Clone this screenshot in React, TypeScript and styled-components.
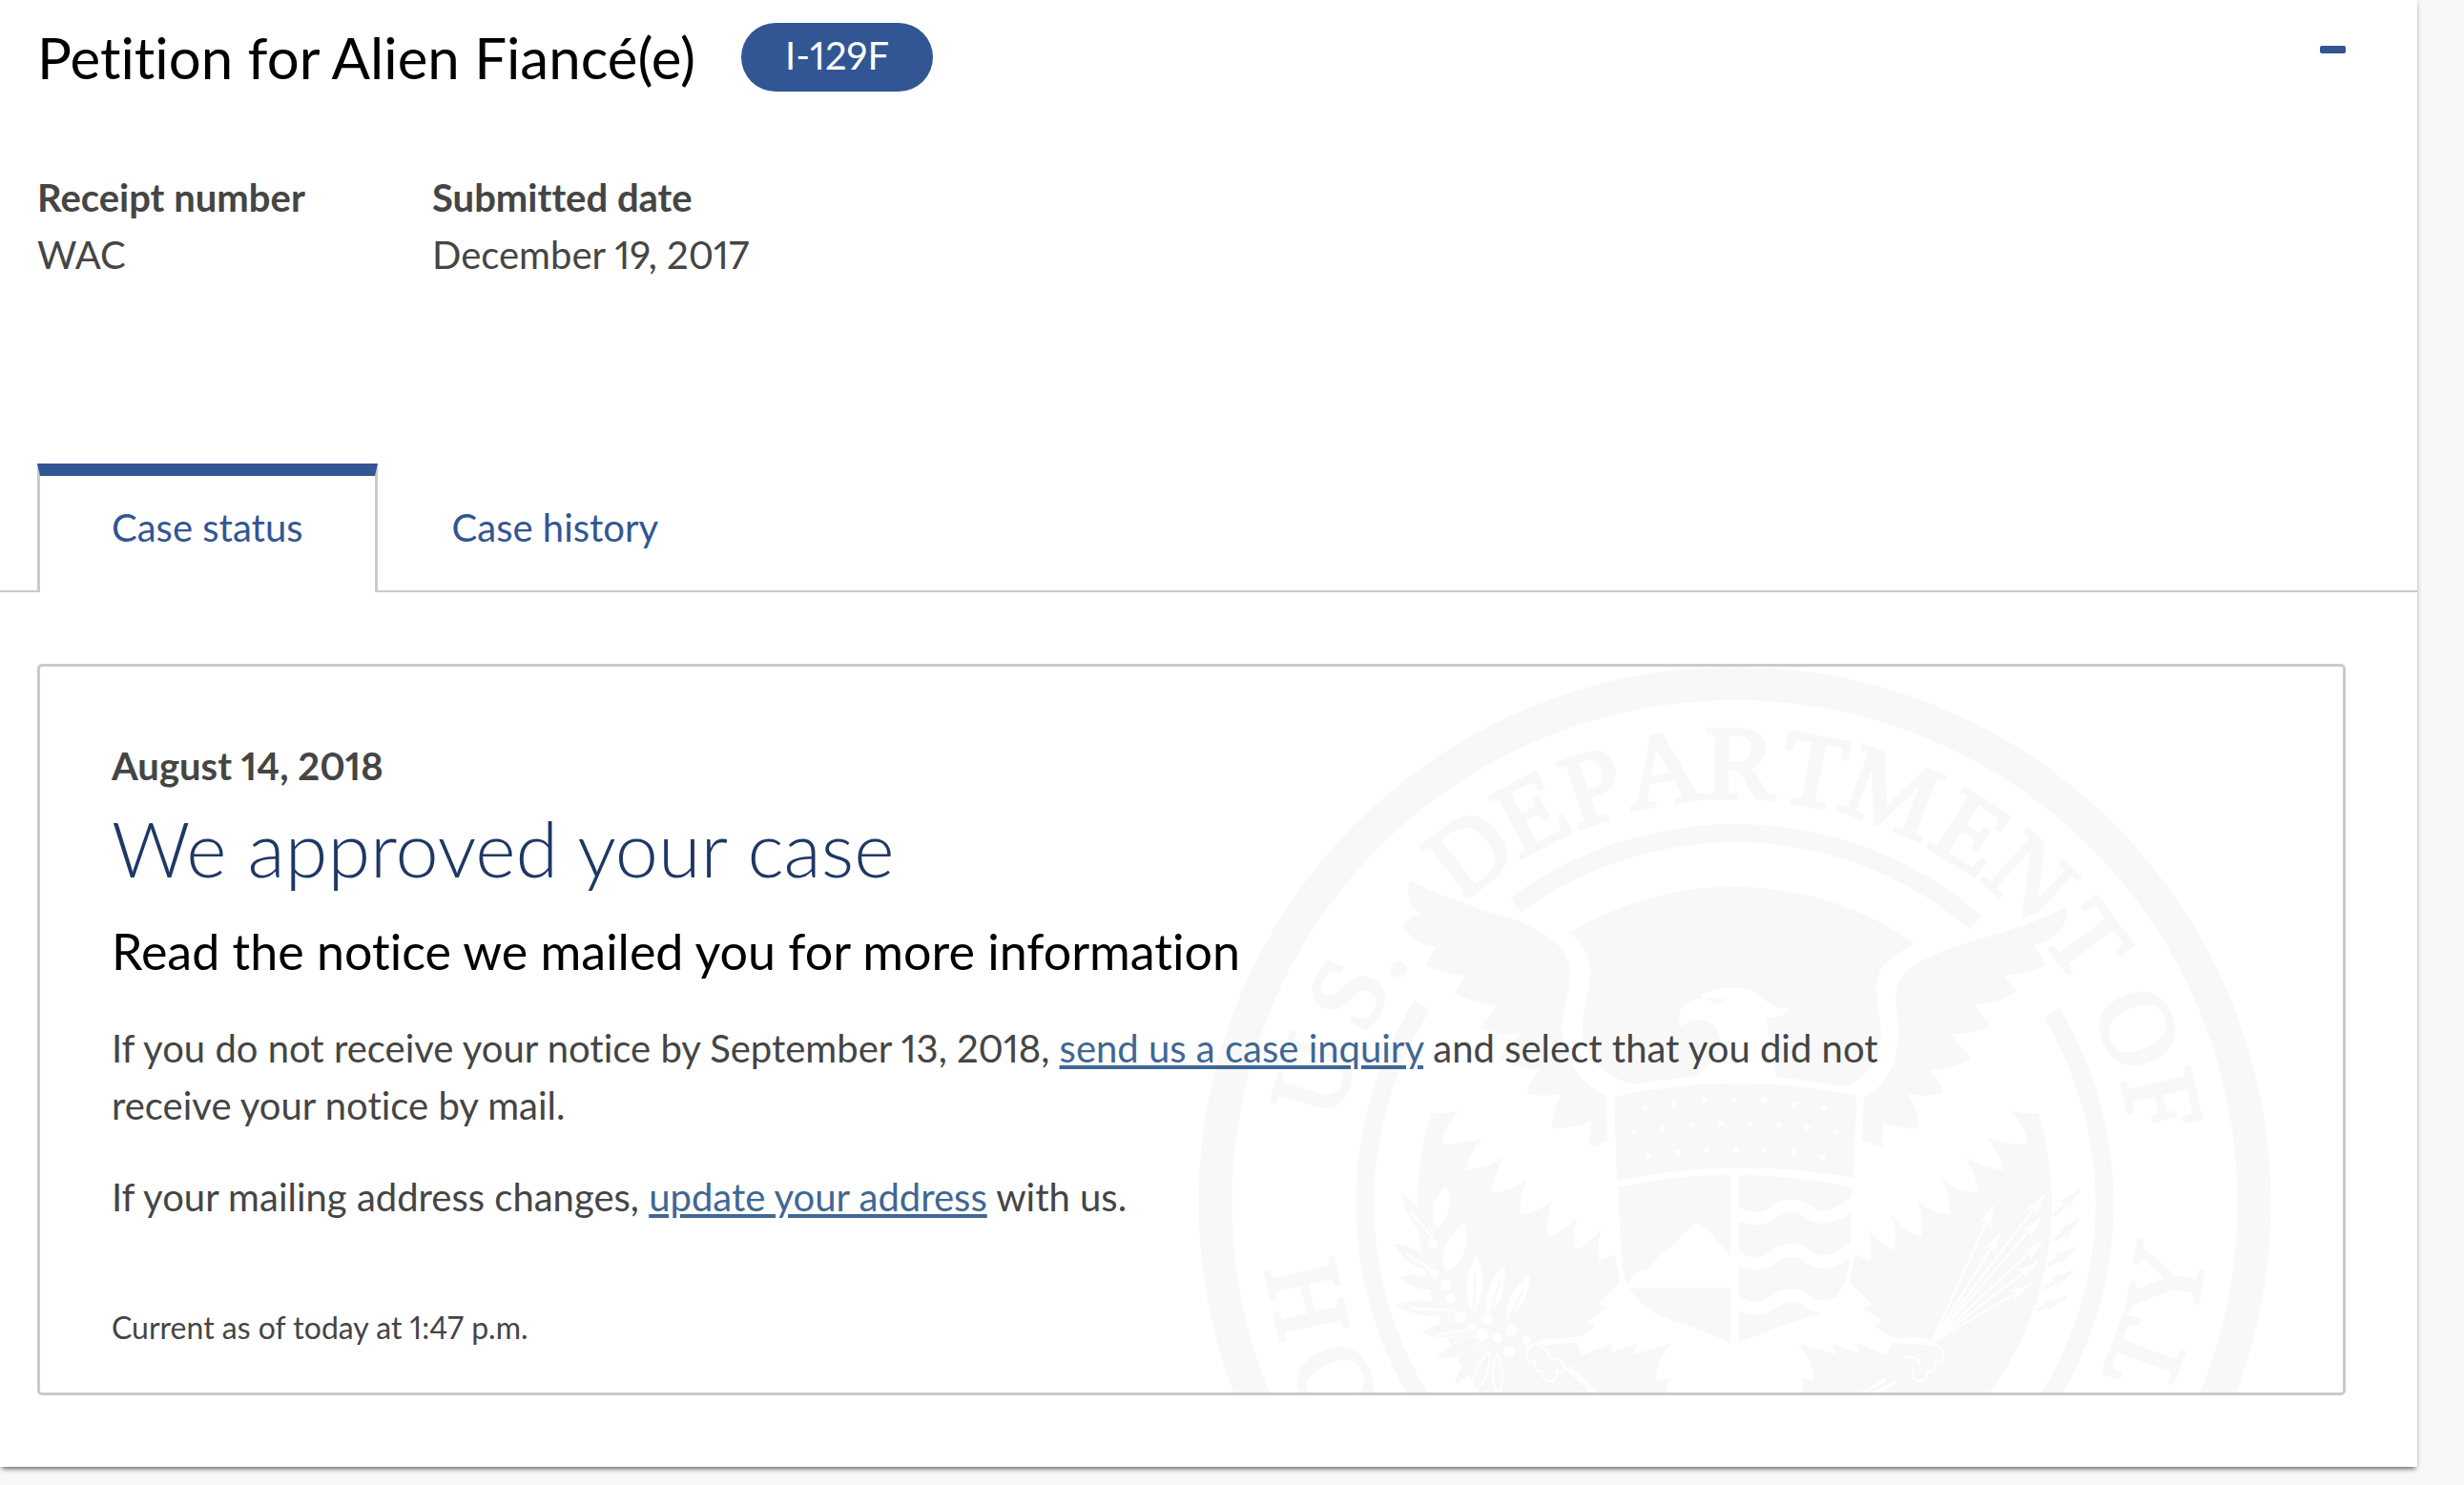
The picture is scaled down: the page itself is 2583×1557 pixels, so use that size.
import React, { useState } from "react";
import styled, { createGlobalStyle } from "styled-components";

const color = {
  blue: "#325694",
  navy: "#1f3865",
  link: "#3f6794",
  text: "#454545",
  line: "#cacaca",
  page: "#f8f8f8",
  seal: "#f8f8f8",
};

const GlobalStyle = createGlobalStyle`
  * { box-sizing: border-box; }
  body {
    margin: 0;
    background: ${color.page};
    color: ${color.text};
    font-family: Lato, "Open Sans", sans-serif;
    font-size: 40px;
    line-height: 60px;
    font-variant-ligatures: none;
    font-variant-numeric: proportional-nums;
  }
`;

const Panel = styled.main`
  margin-right: 49px;
  margin-bottom: 19px;
  padding: 24px 0 75px;
  background: #fff;
  box-shadow: 0 4px 5px -2px rgba(0, 0, 0, 0.55), 0 0 5px rgba(0, 0, 0, 0.14);
`;

const Header = styled.header`
  display: flex;
  align-items: center;
  gap: 48px;
  padding: 0 75px 0 39px;
`;

const Title = styled.h1`
  margin: 0;
  color: #000;
  font-size: 60px;
  font-weight: 400;
  line-height: 72px;
`;

const FormBadge = styled.span`
  padding: 4px 46px 8px;
  border-radius: 36px;
  background: ${color.blue};
  color: #fff;
  line-height: 60px;
`;

const CollapseButton = styled.button`
  align-self: flex-start;
  display: flex;
  margin-left: auto;
  padding: 24px 0;
  border: 0;
  background: none;
  cursor: pointer;
`;

const Minus = styled.span`
  width: 27px;
  height: 8px;
  border-radius: 2px;
  background: ${color.blue};
`;

const Facts = styled.dl`
  display: flex;
  margin: 81px 0 189px;
  padding: 0 39px;
`;

const Fact = styled.div`
  min-width: 414px;
`;

const FactName = styled.dt`
  font-weight: 700;
`;

const FactValue = styled.dd`
  margin: 0;
`;

const TabList = styled.div`
  display: flex;
  padding-left: 39px;
  border-bottom: 2px solid ${color.line};
`;

const Tab = styled.button<{ $active: boolean }>`
  margin-bottom: -2px;
  padding: 24px 75px 38px;
  border: 3px solid ${(p) => (p.$active ? color.line : "transparent")};
  border-top: 13px solid ${(p) => (p.$active ? color.blue : "transparent")};
  border-bottom: 0;
  background: ${(p) => (p.$active ? "#fff" : "none")};
  color: ${color.blue};
  font: inherit;
  cursor: pointer;
`;

const StatusCard = styled.section`
  position: relative;
  overflow: hidden;
  margin: 75px 75px 0 39px;
  padding: 74px 75px 44px;
  border: 3px solid ${color.line};
  border-radius: 5px;
`;

const StatusText = styled.div`
  position: relative;
  max-width: 1930px;
`;

const StatusDate = styled.p`
  margin: 0;
  font-weight: 700;
`;

const StatusTitle = styled.h2`
  margin: 14px 0 0;
  color: ${color.navy};
  font-size: 81px;
  font-weight: 300;
  line-height: 84px;
`;

const StatusLead = styled.h3`
  margin: 36px 0 42px;
  color: #000;
  font-size: 52px;
  font-weight: 400;
  line-height: 60px;
`;

const Paragraph = styled.p`
  margin: 0 0 36px;
`;

const TextLink = styled.a`
  color: ${color.link};
  text-decoration: underline;
  text-decoration-thickness: 4px;
  text-underline-offset: 3px;
`;

const Timestamp = styled.p`
  margin: 83px 0 0;
  font-size: 32px;
  line-height: 48px;
`;

const SealArt = styled.svg`
  position: absolute;
  top: 0;
  right: 75px;
  width: 1125px;
  height: 1125px;
`;

const CX = 1819.5;
const CY = 1261;

const upperLetters: [string, number][] = [
  ["U", -73.2], ["S", -61.6], [".", -55.2], ["D", -37.2], ["E", -27.6], ["P", -18.8], ["A", -9.4],
  ["R", 0.7], ["T", 10.4], ["M", 21], ["E", 32.6], ["N", 42.4], ["T", 53.4], ["O", 66.6], ["F", 76.6],
];

const lowerLetters: [string, number][] = [
  ["H", -102.7], ["O", -114.4], ["T", 110.4], ["Y", 100.3],
];

const stars: [number, number][] = [
  [1725.7, 1161.3], [1756, 1157.3], [1787.7, 1154], [1819, 1153.3], [1850.7, 1154], [1882.3, 1158], [1913.3, 1161.7],
  [1714, 1187.3], [1744.3, 1183.3], [1775, 1179.3], [1805, 1177.7], [1835.7, 1178.3], [1866, 1180], [1895.7, 1182.7], [1926, 1187.3],
  [1729, 1212.7], [1760, 1208.3], [1790, 1206], [1820.7, 1205.3], [1850.7, 1206], [1881.3, 1208.3], [1911.7, 1213.3],
];

const starPath = (x: number, y: number) =>
  Array.from({ length: 10 }, (_, i) => {
    const r = i % 2 ? 2 : 5;
    const a = (Math.PI * i) / 5 - Math.PI / 2;
    return `${i ? "L" : "M"}${(x + r * Math.cos(a)).toFixed(1)} ${(y + r * Math.sin(a)).toFixed(1)}`;
  }).join("") + "Z";

type Leaf = [number, number, number, number, number];

const leafPath = ([x1, y1, x2, y2, w]: Leaf) => {
  const dx = x2 - x1;
  const dy = y2 - y1;
  const len = Math.hypot(dx, dy);
  const mx = x1 + dx * 0.45;
  const my = y1 + dy * 0.45;
  const nx = (-dy / len) * w;
  const ny = (dx / len) * w;
  return `M${x1} ${y1}Q${mx + nx} ${my + ny} ${x2} ${y2}Q${mx - nx} ${my - ny} ${x1} ${y1}Z`;
};

const darkLeaves: Leaf[] = [
  [1504, 1304, 1469, 1249, 15], [1506, 1332, 1461, 1304, 16], [1516, 1350, 1467, 1339, 15],
  [1528, 1374, 1463, 1369, 17], [1546, 1392, 1491, 1397, 17], [1556, 1402, 1506, 1425, 15],
  [1562, 1408, 1525, 1452, 14],
];

const lightLeaves: Leaf[] = [
  [1507, 1287, 1517, 1243, 17], [1516, 1334, 1537, 1282, 21], [1545, 1378, 1549, 1316, 17],
  [1560, 1380, 1578, 1326, 15], [1580, 1384, 1605, 1336, 14],
];

const berries: [number, number, number][] = [
  [1503, 1305, 5], [1504, 1335, 4], [1517, 1347, 6], [1522, 1362, 5], [1532, 1381, 6], [1544, 1392, 4],
  [1555, 1399, 6], [1560, 1383, 6], [1570, 1403, 5], [1585, 1395, 6], [1583, 1417, 6], [1601, 1405, 5],
];

const arrowHead = (x1: number, y1: number, x2: number, y2: number, len: number) => {
  const d = Math.hypot(x2 - x1, y2 - y1);
  const ux = (x2 - x1) / d;
  const uy = (y2 - y1) / d;
  const bx = x2 - ux * len;
  const by = y2 - uy * len;
  const w = len * 0.26;
  return `M${x2} ${y2}L${bx - uy * w} ${by + ux * w}L${bx + ux * 5} ${by + uy * 5}L${bx + uy * w} ${by - ux * w}Z`;
};

const lightArrows: [number, number][] = [
  [2091, 1264], [2098, 1293], [2144, 1253], [2140, 1277], [2142, 1301], [2137, 1323], [2129, 1347],
];

const darkArrows: [number, number, number, number][] = [
  [2154, 1276, 2181, 1247], [2154, 1301, 2181, 1278], [2148, 1327, 2177, 1308],
  [2144, 1351, 2174, 1333], [2135, 1374, 2167, 1360],
];

const wing =
  "M2167 950C2171 962 2162 985 2133 991L2146 1012Q2128 1021 2102 1023L2115 1039Q2098 1052 2070 1053L2088 1075Q2074 1084 2045 1084L2067 1110Q2050 1120 2024 1122Q2036 1133 2037 1147Q2020 1150 2001 1147Q2012 1162 2012 1183Q1992 1184 1975 1177L1974 1203L1953 1196L1955 1150C1982 1136 1991 1110 1991 1080L1988 1043C1990 1014 2025 1000 2075 985C2110 974 2140 966 2167 950Z";

const leftWing =
  "M1479 922C1474 940 1480 956 1492 958Q1474 962 1472 973Q1486 990 1507 993L1495 1012Q1515 1022 1537 1023L1526 1041Q1547 1053 1570 1054L1553 1077Q1572 1086 1594 1084L1572 1110Q1590 1120 1615 1122Q1603 1133 1602 1147Q1619 1150 1638 1147Q1628 1162 1628 1183Q1648 1184 1669 1176L1667 1199L1672 1203L1686 1196L1685 1149C1657 1136 1638 1108 1638 1075C1640 1055 1648 1035 1647 1017C1642 985 1610 970 1565 957C1530 945 1500 936 1479 922Z";

const lowerWing =
  "M1501 1167Q1518 1168 1532 1164Q1514 1180 1512 1200Q1538 1200 1556 1192Q1541 1208 1538 1227Q1562 1224 1578 1213Q1567 1230 1564 1251Q1588 1248 1603 1236Q1594 1254 1594 1274Q1614 1271 1628 1259Q1621 1276 1624 1297Q1645 1290 1655 1273Q1649 1292 1652 1311Q1670 1304 1680 1287Q1675 1303 1677 1322L1694 1315L1699 1345L1676 1367L1684 1372L1665 1385L1673 1390Q1660 1402 1650 1402L1616 1405L1611 1411L1654 1408L1660 1421L1691 1408L1690 1418L1717 1409L1714 1420L1754 1408Q1738 1426 1736 1447L1750 1445L1746 1466L1557 1466A332 332 0 0 1 1501 1167Z";

const wave = "M1820 1270Q1841 1285 1860 1271T1897 1271T1946 1260";

function Seal() {
  return (
    <SealArt viewBox="1257 699 1125 1125" aria-hidden="true" fill={color.seal}>
      <circle cx={CX} cy={CY} r="544.5" fill="none" stroke={color.seal} strokeWidth="35" />
      <g
        fontFamily='"Liberation Serif", serif'
        fontSize="110"
        textAnchor="middle"
        stroke={color.seal}
        strokeWidth="4"
      >
        {upperLetters.map(([letter, angle]) => (
          <text key={angle} x={CX} y={CY - 424} transform={`rotate(${angle} ${CX} ${CY})`}>
            {letter}
          </text>
        ))}
        {lowerLetters.map(([letter, angle]) => (
          <text key={angle} x={CX} y={CY + 496} transform={`rotate(${angle + 180} ${CX} ${CY})`}>
            {letter}
          </text>
        ))}
      </g>
      <g fill="none" stroke={color.seal} strokeWidth="19">
        <path d="M1590 949A387.500 387.500 0 0 1 2072 967" />
        <path d="M1492 1054A387.500 387.500 0 0 0 1492 1469" />
        <path d="M2152 1062A387.500 387.500 0 0 1 2147 1469" />
      </g>
      <g stroke="#fff" strokeWidth="14" paintOrder="stroke">
        <path d={leftWing} />
        <path d={wing} />
      </g>
      <path d="M1646 978A332 332 0 0 1 2008 989C1975 1008 1968 1015 1968 1040L1973 1083Q1974 1120 1937 1139Q1819 1118 1713 1137C1680 1128 1658 1104 1660 1075C1660 1055 1669 1040 1668 1015C1667 1000 1659 988 1646 978Z" />
      <path
        fill="#fff"
        d="M1774 1131C1790 1118 1808 1108 1805 1092C1802 1074 1790 1068 1780 1069Q1770 1069 1764 1077C1758 1068 1759 1050 1786 1046L1783 1043C1800 1034 1828 1033 1840 1040C1852 1048 1856 1058 1877 1057C1872 1065 1862 1068 1853 1067C1854 1085 1860 1110 1864 1132Z"
      />
      <path d="M1788 1047L1812 1046Q1804 1052 1798 1053Q1796 1049 1788 1047Z" />
      <path d="M1693 1150Q1819 1122 1947 1149L1944 1235Q1820 1212 1696 1238Z" />
      <path fill="#fff" d={stars.map(([x, y]) => starPath(x, y)).join("")} />
      <path d="M1697 1245Q1756 1232 1815 1232V1317L1802 1302L1792 1290L1779 1283L1767 1292L1758 1303L1740 1317L1730 1330L1715 1335L1706 1347Q1700 1330 1698 1260Z" />
      <path d="M1709 1350H1815V1408Q1794 1398 1773 1391C1740 1381 1720 1370 1709 1350Z" />
      <path d="M1824 1232Q1884 1232 1942 1245L1941 1310Q1939 1358 1907 1378Q1850 1396 1824 1408Z" />
      <g fill="none" stroke="#fff" strokeWidth="13">
        <path d={wave} />
        <path d={wave} transform="translate(0 47)" />
        <path d={wave} transform="translate(0 94)" />
      </g>
      <path d={lowerWing} />
      <path d={lowerWing} transform="translate(3639 0) scale(-1 1)" />

      <path d={darkLeaves.map(leafPath).join("")} stroke="#fff" strokeWidth="1" />
      <path d={lightLeaves.map(leafPath).join("")} fill="#fff" />
      <g fill="none" stroke="#fff" strokeWidth="2">
        <path d="M1504 1300L1480 1270M1505 1333L1475 1315M1528 1374L1480 1372M1546 1393L1506 1400" />
        <path d={leafPath([1562, 1418, 1545, 1462, 12])} />
        <path d={leafPath([1570, 1420, 1572, 1464, 10])} />
      </g>
      <g stroke={color.seal} strokeWidth="2">
        <path d="M1546 1374L1547 1336M1563 1376L1574 1342M1584 1380L1598 1352" />
      </g>
      <g fill="#fff">
        {berries.map(([x, y, r]) => (
          <circle key={`${x}-${y}`} cx={x} cy={y} r={r} />
        ))}
      </g>
      <g fill="none" stroke="#fff" strokeWidth="2">
        <path d="M1611 1408Q1598 1414 1602 1426Q1606 1430 1610 1426Q1608 1440 1618 1438Q1618 1450 1628 1448Q1636 1444 1632 1436M1611 1408Q1624 1414 1626 1424Q1640 1424 1641 1436Q1636 1444 1632 1436" />
        <path d="M2028 1408Q2041 1414 2037 1426Q2033 1430 2029 1426Q2031 1440 2021 1438Q2021 1450 2011 1448Q2003 1444 2007 1436M2028 1408Q2015 1400 1996 1405M1998 1424Q2012 1420 2014 1432" />
        <path d="M1645 1434L1674 1462" strokeWidth="6" />
        <path d="M1990 1448L1960 1464M1978 1446L1948 1464" strokeWidth="3" />
      </g>
      <path
        d={lightArrows.map(([x, y]) => `M2026 1408L${x} ${y}`).join("")}
        fill="none"
        stroke="#fff"
        strokeWidth="2"
      />
      <path d={lightArrows.map(([x, y]) => arrowHead(2026, 1408, x, y, 22)).join("")} fill="#fff" />
      <path d={darkArrows.map(([a, b, c, d]) => arrowHead(a, b, c, d, 24)).join("")} />
      <path
        d={darkArrows.map(([a, b, c, d]) => `M${a} ${b}L${c} ${d}`).join("")}
        stroke={color.seal}
        strokeWidth="4"
      />
    </SealArt>
  );
}

const tabs = ["Case status", "Case history"];

export default function App() {
  const [active, setActive] = useState(tabs[0]);

  return (
    <>
      <GlobalStyle />
      <Panel>
        <Header>
          <Title>Petition for Alien Fiancé(e)</Title>
          <FormBadge>I-129F</FormBadge>
          <CollapseButton type="button" aria-label="Collapse case details" aria-expanded="true">
            <Minus />
          </CollapseButton>
        </Header>

        <Facts>
          <Fact>
            <FactName>Receipt number</FactName>
            <FactValue>WAC</FactValue>
          </Fact>
          <Fact>
            <FactName>Submitted date</FactName>
            <FactValue>December 19, 2017</FactValue>
          </Fact>
        </Facts>

        <TabList role="tablist">
          {tabs.map((name) => (
            <Tab
              key={name}
              type="button"
              role="tab"
              aria-selected={name === active}
              $active={name === active}
              onClick={() => setActive(name)}
            >
              {name}
            </Tab>
          ))}
        </TabList>

        <StatusCard role="tabpanel">
          <Seal />
          <StatusText>
            <StatusDate>August 14, 2018</StatusDate>
            <StatusTitle>We approved your case</StatusTitle>
            <StatusLead>Read the notice we mailed you for more information</StatusLead>
            <Paragraph>
              If you do not receive your notice by September 13, 2018,{" "}
              <TextLink href="#inquiry">send us a case inquiry</TextLink> and select that you did not receive your
              notice by mail.
            </Paragraph>
            <Paragraph>
              If your mailing address changes, <TextLink href="#address">update your address</TextLink> with us.
            </Paragraph>
            <Timestamp>Current as of today at 1:47 p.m.</Timestamp>
          </StatusText>
        </StatusCard>
      </Panel>
    </>
  );
}
